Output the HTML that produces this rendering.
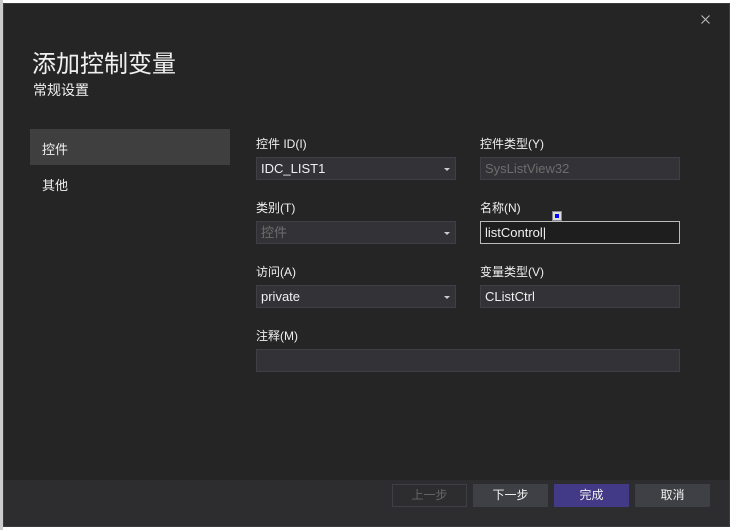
<!DOCTYPE html><html><head><meta charset="utf-8"><style>
body{margin:0;width:736px;height:530px;background:#fff;position:relative;overflow:hidden;font-family:"Liberation Sans","Noto Sans CJK SC",sans-serif;}
.dlg{position:absolute;left:3px;top:3px;width:727px;height:524px;background:#252526;border:1px solid #3c3c3c;box-sizing:border-box}
.a{position:absolute;color:#f0f0f0}
.lbl{position:absolute;font-size:12px;color:#f0f0f0}
.box{position:absolute;width:200px;height:23px;background:#333337;border:1px solid #3f3f46;box-sizing:border-box;font-size:13px;color:#f0f0f0;line-height:21px;padding-left:4px}
.dd:after{content:"";position:absolute;right:5px;top:10px;border-left:3px solid transparent;border-right:3px solid transparent;border-top:3px solid #ccc}
.btn{position:absolute;top:484px;width:75px;height:23px;background:#3f3f46;color:#f0f0f0;font-size:12px;text-align:center;line-height:23px}
</style></head><body>
<div style="position:absolute;left:0;top:0;width:3px;height:530px;background:#ccc"></div>
<div class="dlg">
<div style="position:absolute;left:0;right:0;top:476px;bottom:0;background:#2d2d30"></div>
</div>
<svg style="position:absolute;left:701px;top:15px" width="9" height="9"><path d="M0.5 0.5L8.5 8.5M8.5 0.5L0.5 8.5" stroke="#bbb" stroke-width="1.1"/></svg>
<div class="a" style="left:32px;top:49px;font-size:24px;line-height:32px">添加控制变量</div>
<div class="a" style="left:33px;top:80px;font-size:14px">常规设置</div>
<div style="position:absolute;left:30px;top:129px;width:200px;height:36px;background:#3f3f40"></div>
<div class="a" style="left:42px;top:139px;font-size:13px">控件</div>
<div class="a" style="left:42px;top:175px;font-size:13px">其他</div>
<div class="lbl" style="left:256px;top:135px">控件 ID(I)</div>
<div class="lbl" style="left:480px;top:135px">控件类型(Y)</div>
<div class="box dd" style="left:256px;top:157px">IDC_LIST1</div>
<div class="box" style="left:480px;top:157px;color:#6d6d6d">SysListView32</div>
<div class="lbl" style="left:256px;top:199px">类别(T)</div>
<div class="lbl" style="left:480px;top:199px">名称(N)</div>
<div class="box dd" style="left:256px;top:221px;color:#6d6d6d">控件</div>
<div class="box" style="left:480px;top:221px;background:#1e1e1e;border-color:#bbb">listControl|</div>
<div style="position:absolute;left:552px;top:211px;width:10px;height:10px;background:#ddd;border:1px solid #888;box-sizing:border-box"><div style="margin:2px;width:4px;height:4px;background:#00f"></div></div>
<div class="lbl" style="left:256px;top:263px">访问(A)</div>
<div class="lbl" style="left:480px;top:263px">变量类型(V)</div>
<div class="box dd" style="left:256px;top:285px">private</div>
<div class="box" style="left:480px;top:285px">CListCtrl</div>
<div class="lbl" style="left:256px;top:327px">注释(M)</div>
<div class="box" style="left:256px;top:349px;width:424px"></div>
<div class="btn" style="left:392px;background:#2d2d30;border:1px solid #3f3f46;box-sizing:border-box;color:#656565;line-height:21px">上一步</div>
<div class="btn" style="left:473px">下一步</div>
<div class="btn" style="left:554px;background:#433a87">完成</div>
<div class="btn" style="left:635px">取消</div>
</body></html>
